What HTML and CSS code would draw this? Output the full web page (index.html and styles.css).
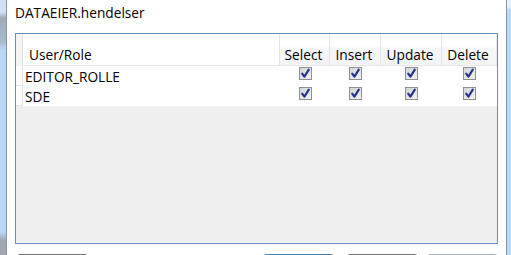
FILE: index.html
```html
<!DOCTYPE html>
<html lang="no">
<head>
    <meta charset="UTF-8">
    <title>Privileges</title>
    <link rel="stylesheet" href="styles.css">
</head>
<body>
    <div class="frame frame-left"></div>
    <div class="dialog">
        <div class="title">DATAEIER.hendelser</div>
        <div class="grid">
            <div class="cell corner"></div>
            <div class="cell head name">User/Role</div>
            <div class="cell head">Select</div>
            <div class="cell head">Insert</div>
            <div class="cell head">Update</div>
            <div class="cell head">Delete</div>

            <div class="cell rowhead"></div>
            <div class="cell name">EDITOR_ROLLE</div>
            <div class="cell check"><span class="box"><svg width="13" height="13" viewBox="0 0 13 13"><path d="M3.2 6.6 L5.4 9.6 L9.8 2.6" /></svg></span></div>
            <div class="cell check"><span class="box"><svg width="13" height="13" viewBox="0 0 13 13"><path d="M3.2 6.6 L5.4 9.6 L9.8 2.6" /></svg></span></div>
            <div class="cell check"><span class="box"><svg width="13" height="13" viewBox="0 0 13 13"><path d="M3.2 6.6 L5.4 9.6 L9.8 2.6" /></svg></span></div>
            <div class="cell check"><span class="box"><svg width="13" height="13" viewBox="0 0 13 13"><path d="M3.2 6.6 L5.4 9.6 L9.8 2.6" /></svg></span></div>

            <div class="cell rowhead"></div>
            <div class="cell name">SDE</div>
            <div class="cell check"><span class="box"><svg width="13" height="13" viewBox="0 0 13 13"><path d="M3.2 6.6 L5.4 9.6 L9.8 2.6" /></svg></span></div>
            <div class="cell check"><span class="box"><svg width="13" height="13" viewBox="0 0 13 13"><path d="M3.2 6.6 L5.4 9.6 L9.8 2.6" /></svg></span></div>
            <div class="cell check"><span class="box"><svg width="13" height="13" viewBox="0 0 13 13"><path d="M3.2 6.6 L5.4 9.6 L9.8 2.6" /></svg></span></div>
            <div class="cell check"><span class="box"><svg width="13" height="13" viewBox="0 0 13 13"><path d="M3.2 6.6 L5.4 9.6 L9.8 2.6" /></svg></span></div>
        </div>
        <!-- only the top edge of the buttons is visible in the window -->
        <div class="buttons">
            <button class="btn" aria-label="Help"></button>
            <span class="spacer"></span>
            <button class="btn default" aria-label="OK"></button>
            <button class="btn" aria-label="Cancel"></button>
            <button class="btn disabled" aria-label="Apply"></button>
        </div>
    </div>
    <div class="frame frame-right"></div>
</body>
</html>
```

FILE: styles.css
```css
html, body {
    margin: 0;
    padding: 0;
    height: 255px;
    overflow: hidden;
}
body {
    display: flex;
    font-family: "Open Sans", "Noto Sans", sans-serif;
    font-size: 13.7px;
    color: #000;
    background: #fff;
}
.frame {
    flex: none;
    height: 255px;
}
.frame-left {
    width: 6px;
    border-right: 1px solid #8796a6;
    background: linear-gradient(#cfe1f2 0, #cfe1f2 12px, #9eabb8 18px, #a9bccc 42px, #b8d8f6 50px, #b8d8f6 232px, #9fa8b1 240px, #9fa8b1 255px);
}
.frame-right {
    width: 5px;
    border-left: 1px solid #8796a6;
    background: linear-gradient(#e4f0fb 0, #e4f0fb 7px, #b9dbfb 10px, #b9dbfb 255px);
}
.dialog {
    flex: 1;
    padding: 0 8px;
    display: flex;
    flex-direction: column;
}
.title {
    flex: none;
    height: 33px;
    line-height: 26px;
}
.grid {
    flex: none;
    box-sizing: border-box;
    height: 211px;
    border: 1px solid #6d8eb4;
    background: #f0f0f0;
    display: grid;
    grid-template-columns: 7px 257px 50px 51px 61px 55px;
    grid-template-rows: 32px 20px 20px;
    align-content: start;
}
.cell {
    box-sizing: border-box;
    white-space: nowrap;
}
.corner {
    background: #f4f4f4;
    border-right: 1px solid #e2e2e2;
}
.head {
    background: linear-gradient(#fff 0, #fff 13px, #f6f7f9 14px, #f3f4f6 32px);
    border-right: 1px solid #e3e6ea;
    border-bottom: 1px solid #e6e6e6;
    text-align: center;
    padding-top: 10px;
    padding-right: 2px;
    line-height: 22px;
}
.head.name {
    text-align: left;
    padding-left: 6px;
}
.head:last-child {
    border-right: none;
}
.rowhead {
    background: #fff;
    border-right: 1px solid #e2e2e2;
    border-bottom: 1px solid #e2e2e2;
}
.name {
    background: #fff;
    padding-left: 2px;
    line-height: 21px;
}
.check {
    background: #fff;
    display: flex;
    justify-content: center;
    padding-top: 1px;
}
.box {
    width: 13px;
    height: 13px;
    box-sizing: border-box;
    border: 1px solid #8f8f8f;
    background: linear-gradient(135deg, #d4d6d9, #f2f2f2);
    display: block;
    position: relative;
}
.box svg {
    position: absolute;
    left: -1px;
    top: -1px;
}
.box path {
    fill: none;
    stroke: #25308a;
    stroke-width: 2.1;
    stroke-linecap: round;
    stroke-linejoin: round;
}
.buttons {
    flex: none;
    display: flex;
    margin-top: 10px;
    padding-left: 2px;
    gap: 11px;
}
.spacer {
    flex: 1;
}
.btn {
    width: 71px;
    height: 23px;
    flex: none;
    border: 1px solid #707070;
    border-radius: 3px;
    background: linear-gradient(#f2f2f2, #dddddd);
    font: inherit;
}
.btn.default {
    border-color: #3c7fb1;
    margin-right: 2px;
}
.btn.disabled {
    border-color: #adb2b5;
    margin-left: -2px;
}
```
